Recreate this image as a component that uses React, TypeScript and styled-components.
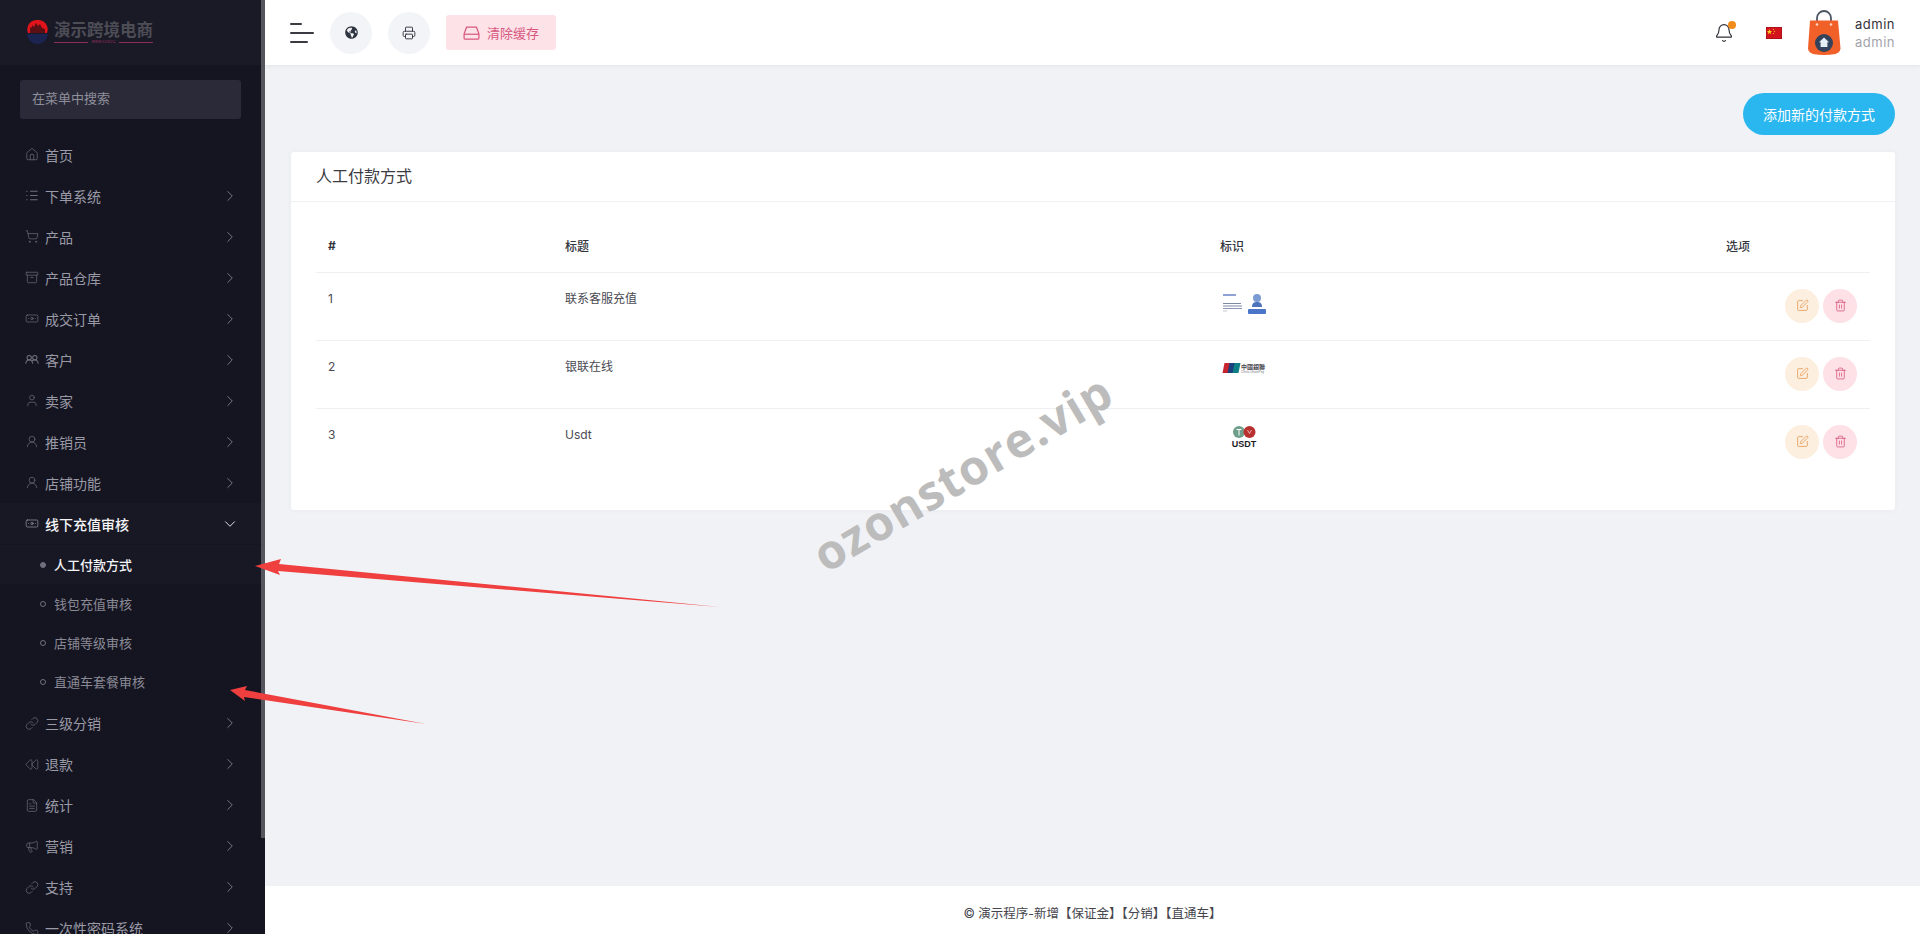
import React from "react";
import styled, { createGlobalStyle } from "styled-components";
import {
  Home, ShoppingCart, Archive, Banknote, User, UserRound, Link, Rewind, FileText,
  Megaphone, Phone, ChevronRight, ChevronDown, Printer, Bell, SquarePen, Trash2,
} from "lucide-react";
import { FaGlobeAmericas } from "react-icons/fa";

const FONT = `Inter, "Noto Sans CJK SC", "Noto Sans", sans-serif`;

const Global = createGlobalStyle`
  html, body { margin: 0; padding: 0; height: 100%; overflow: hidden; background: #f1f2f6; }
  #root { height: 100%; }
  * { box-sizing: border-box; }
  body { font-family: ${FONT}; color: #3b3b45; }
`;

const Page = styled.div`
  position: relative;
  display: flex;
  height: 934px;
  width: 1920px;
  overflow: hidden;
`;

/* ---------- sidebar ---------- */
const Sidebar = styled.aside`
  position: relative;
  flex: 0 0 265px;
  height: 100%;
  background: #151521;
  overflow: hidden;
  padding-right: 4px;
`;
const Thumb = styled.div`
  position: absolute;
  right: 0;
  top: 0;
  width: 4px;
  height: 838px;
  background: #56565f;
`;
const Brand = styled.div`
  height: 65px;
  background: #1a1a27;
  display: flex;
  align-items: flex-start;
  padding: 19px 0 0 27px;
  gap: 6px;
`;
const BrandText = styled.div`
  display: flex;
  flex-direction: column;
`;
const BrandName = styled.div`
  font-size: 16.5px;
  line-height: 22px;
  font-weight: 700;
  color: #4d4d56;
  white-space: nowrap;
`;
const BrandRule = styled.div`
  display: flex;
  align-items: center;
  gap: 3px;
  height: 4px;
  margin-top: -1px;
  color: #8a2f55;
  font-size: 4px;
  line-height: 4px;
  white-space: nowrap;
  &::before, &::after { content: ""; flex: 1; height: 1px; background: #8a2f55; }
`;
const SearchBox = styled.div`
  margin: 15px 20px 0;
  height: 39px;
  border-radius: 3px;
  background: #2a2a38;
  color: #8f8f9b;
  font-size: 13px;
  line-height: 37px;
  padding-left: 12px;
  width: 221px;
`;
const Menu = styled.nav`
  margin-top: 15px;
  display: flex;
  flex-direction: column;
`;
const Row = styled.div<{ $open?: boolean }>`
  height: 41px;
  flex: 0 0 41px;
  display: flex;
  align-items: center;
  padding: 0 22px 0 25px;
  font-size: 14px;
  color: ${(p) => (p.$open ? "#f4f4f6" : "#9a9aa6")};
  font-weight: ${(p) => (p.$open ? 500 : 400)};
  background: ${(p) => (p.$open ? "#181825" : "transparent")};
  svg.lead { color: ${(p) => (p.$open ? "#9a9aa6" : "#6f6f7d")}; }
  svg.arrow { color: ${(p) => (p.$open ? "#e4e4ea" : "#8b8b96")}; }
`;
const RowIcon = styled.span`
  display: inline-flex;
  width: 14px;
  justify-content: center;
  margin-right: 6px;
`;
const RowLabel = styled.span`
  flex: 1;
  white-space: nowrap;
`;
const SubList = styled.div`
  display: flex;
  flex-direction: column;
  padding: 1px 0 1.5px;
`;
const SubRow = styled.div<{ $active?: boolean }>`
  height: 39px;
  flex: 0 0 39px;
  display: flex;
  align-items: center;
  padding-left: 40px;
  font-size: 13px;
  color: ${(p) => (p.$active ? "#f4f4f6" : "#8a8a96")};
  font-weight: ${(p) => (p.$active ? 500 : 400)};
  background: ${(p) => (p.$active ? "#181825" : "transparent")};
`;
const Dot = styled.span<{ $active?: boolean }>`
  width: 6px;
  height: 6px;
  border-radius: 50%;
  margin-right: 8px;
  border: 1px solid #6f6f7d;
  background: ${(p) => (p.$active ? "#6f6f7d" : "transparent")};
`;

/* ---------- main ---------- */
const Main = styled.main`
  flex: 1;
  display: flex;
  flex-direction: column;
  min-width: 0;
  height: 100%;
`;
const Topbar = styled.header`
  height: 65px;
  flex: 0 0 65px;
  background: #fff;
  display: flex;
  align-items: center;
  padding: 0 25px 0 25px;
  box-shadow: 0 1px 4px rgba(60, 60, 90, 0.08);
  position: relative;
`;
const Burger = styled.div`
  display: flex;
  flex-direction: column;
  gap: 7px;
  width: 24px;
  margin-right: 16px;
`;
const BurgerLine = styled.span<{ $w: number }>`
  display: block;
  height: 2px;
  width: ${(p) => p.$w}px;
  background: #3a3a42;
  border-radius: 1px;
`;
const RoundBtn = styled.div`
  width: 42px;
  height: 42px;
  border-radius: 50%;
  background: #f3f4f8;
  color: #2f3540;
  display: flex;
  align-items: center;
  justify-content: center;
  margin-right: 16px;
`;
const ClearBtn = styled.div`
  width: 110px;
  height: 35px;
  border-radius: 3px;
  background: #fde2e8;
  color: #d8587f;
  font-size: 13px;
  display: flex;
  align-items: center;
  justify-content: center;
  gap: 7px;
`;
const TopRight = styled.div`
  margin-left: auto;
  display: flex;
  align-items: center;
`;
const BellWrap = styled.div`
  position: relative;
  width: 20px;
  height: 24px;
  color: #2f3036;
  margin-right: 32px;
  display: flex;
  align-items: center;
  justify-content: center;
`;
const BellDot = styled.span`
  position: absolute;
  top: 0;
  right: -2px;
  width: 8px;
  height: 8px;
  border-radius: 50%;
  background: #f18b1c;
`;
const FlagWrap = styled.span`
  display: inline-flex;
  margin-right: 25px;
`;
const UserBlock = styled.div`
  display: flex;
  flex-direction: column;
  margin-left: 14px;
  font-size: 13px;
  line-height: 18px;
  letter-spacing: 0.5px;
`;
const UserName = styled.span`
  color: #33333b;
`;
const UserRole = styled.span`
  color: #a3a3ab;
`;
const Content = styled.div`
  flex: 1;
  padding: 28px 25px 0 26px;
  display: flex;
  flex-direction: column;
`;
const Actions = styled.div`
  display: flex;
  justify-content: flex-end;
  margin-bottom: 17px;
`;
const AddBtn = styled.div`
  width: 152px;
  height: 42px;
  border-radius: 21px;
  background: #2ab7ef;
  color: #fff;
  font-size: 14px;
  display: flex;
  align-items: center;
  justify-content: center;
`;
const Card = styled.section`
  background: #fff;
  border-radius: 3px;
  height: 358px;
  box-shadow: 0 0 6px rgba(80, 80, 110, 0.04);
`;
const CardHead = styled.div`
  height: 50px;
  border-bottom: 1px solid #eef0f3;
  padding-left: 25px;
  font-size: 16px;
  line-height: 49px;
  color: #3b3b42;
`;
const CardBody = styled.div`
  padding: 20px 25px 0;
`;
const Table = styled.table`
  width: 100%;
  table-layout: fixed;
  border-collapse: collapse;
  font-size: 12px;
`;
const Th = styled.th<{ $w?: number }>`
  ${(p) => (p.$w ? `width: ${p.$w}px;` : "")}
  height: 50px;
  text-align: left;
  padding: 0 12px 2px;
  font-weight: 500;
  color: #33333b;
  border-bottom: 1px solid #eef0f3;
`;
const HashTh = styled(Th)`
  font-weight: 700;
`;
const Tr = styled.tr`
  & + & td { border-top: 1px solid #eef0f3; }
`;
const Td = styled.td`
  height: 68px;
  vertical-align: top;
  padding: 17px 12px 0;
  line-height: 18px;
  color: #4a4a52;
`;
const LogoCell = styled(Td)`
  padding: 15px 0 0 12px;
`;
const OptCell = styled(Td)`
  padding: 16px 13px 0 0;
`;
const OptRow = styled.div`
  display: flex;
  justify-content: flex-end;
  gap: 4px;
`;
const CircleBtn = styled.div<{ $kind: "edit" | "del" }>`
  width: 34px;
  height: 34px;
  border-radius: 50%;
  display: flex;
  align-items: center;
  justify-content: center;
  background: ${(p) => (p.$kind === "edit" ? "#fcefdf" : "#fde1e7")};
  color: ${(p) => (p.$kind === "edit" ? "#e5934a" : "#d64b76")};
`;
const Footer = styled.footer`
  height: 48px;
  flex: 0 0 48px;
  background: #fff;
  display: flex;
  align-items: center;
  justify-content: center;
  padding-top: 4px;
  font-size: 12.5px;
  color: #45454d;
`;

/* ---------- overlays ---------- */
const Watermark = styled.div`
  position: absolute;
  left: 962px;
  top: 472px;
  transform: translate(-50%, -50%) rotate(-30.5deg);
  font-family: "Open Sans", sans-serif;
  font-weight: 700;
  font-size: 48px;
  letter-spacing: 1px;
  color: #bcbcbc;
  white-space: nowrap;
  pointer-events: none;
`;
const ArrowLayer = styled.svg`
  position: absolute;
  left: 0;
  top: 0;
  pointer-events: none;
`;

const ic = { size: 15, strokeWidth: 1.2, className: "lead" };

const OrderListIcon = () => (
  <svg className="lead" width="15" height="15" viewBox="0 0 15 15" fill="none" stroke="currentColor" strokeWidth="1.1">
    <path d="M5.500 3h8M5.500 7.500h8M5.500 12h8" />
    <path d="M1.500 2.500l1 .8M1.500 7.500h1M1.500 12.500l1-.8" />
  </svg>
);
const PeopleIcon = () => (
  <svg className="lead" width="15" height="15" viewBox="0 0 15 15" fill="none" stroke="currentColor" strokeWidth="1.1">
    <circle cx="4.500" cy="5.500" r="2.300" />
    <circle cx="10.500" cy="5.500" r="2.300" />
    <path d="M.8 12c.3-2.500 1.700-4 3.700-4s3.400 1.500 3.700 4M7.500 9c.7-.7 1.800-1 3-1 2 0 3.400 1.500 3.700 4" />
  </svg>
);

const before = [
  { t: "首页", i: <Home {...ic} />, noArrow: true },
  { t: "下单系统", i: <OrderListIcon /> },
  { t: "产品", i: <ShoppingCart {...ic} /> },
  { t: "产品仓库", i: <Archive {...ic} /> },
  { t: "成交订单", i: <Banknote {...ic} /> },
  { t: "客户", i: <PeopleIcon /> },
  { t: "卖家", i: <User {...ic} /> },
  { t: "推销员", i: <UserRound {...ic} /> },
  { t: "店铺功能", i: <UserRound {...ic} /> },
];
const after = [
  { t: "三级分销", i: <Link {...ic} /> },
  { t: "退款", i: <Rewind {...ic} /> },
  { t: "统计", i: <FileText {...ic} /> },
  { t: "营销", i: <Megaphone {...ic} /> },
  { t: "支持", i: <Link {...ic} /> },
  { t: "一次性密码系统", i: <Phone {...ic} /> },
];
const subs = ["人工付款方式", "钱包充值审核", "店铺等级审核", "直通车套餐审核"];

const MenuRow = ({ t, i, noArrow }: { t: string; i: React.ReactNode; noArrow?: boolean }) => (
  <Row>
    <RowIcon>{i}</RowIcon>
    <RowLabel>{t}</RowLabel>
    {!noArrow && <ChevronRight className="arrow" size={18} strokeWidth={1.1} />}
  </Row>
);

const LogoMark = () => (
  <svg width="21" height="27" viewBox="0 0 21 27">
    <path d="M10.500 1a9.500 9.500 0 0 1 9.500 13H1A9.500 9.500 0 0 1 10.500 1z" fill="#e0141a" />
    <path d="M0 15h21c-1 6-5 10-10.500 10S1 21 0 15z" fill="#1b2350" />
    <path d="M3 14V9l2-1V6l2 2 2-4 2 3 2-2 2 4 3 1v4z" fill="#5c1016" />
  </svg>
);

const HddIcon = () => (
  <svg width="17" height="14" viewBox="0 0 20 17" fill="none" stroke="currentColor" strokeWidth="1.5">
    <path d="M4 1.500h12l3 8v5a1.500 1.500 0 0 1-1.500 1.500h-15A1.500 1.500 0 0 1 1 14.500v-5z" />
    <path d="M1 10h18" />
  </svg>
);

const Flag = () => (
  <svg width="16" height="12" viewBox="0 0 16 12">
    <rect width="16" height="12" fill="#d3141c" />
    <rect x="0.250" y="0.250" width="15.500" height="11.500" fill="none" stroke="#8e1016" strokeWidth="0.500" />
    <path d="M3.500 2l.7 2h2l-1.600 1.200.6 2-1.700-1.200-1.700 1.200.6-2L.8 4h2z" fill="#f7d21e" />
    <circle cx="7.500" cy="2.500" r=".6" fill="#f7d21e" />
    <circle cx="8.500" cy="4.500" r=".6" fill="#f7d21e" />
    <circle cx="7.500" cy="6.500" r=".6" fill="#f7d21e" />
  </svg>
);

const Bag = () => (
  <svg width="34" height="46" viewBox="0 0 34 46">
    <path d="M10 15V8a7 7 0 0 1 14 0v7" fill="none" stroke="#4d5566" strokeWidth="1.800" />
    <path d="M3 10.500h28l2.500 28q-.5 4-5 5.500Q17 46 6 44q-4.500-1.500-5-5.500z" fill="#f2602a" />
    <circle cx="10" cy="14.500" r="1.300" fill="#fbd6c6" />
    <circle cx="24" cy="14.500" r="1.300" fill="#fbd6c6" />
    <circle cx="17" cy="33" r="9" fill="#33425a" />
    <path d="M17 27.500l5 4.800h-1.600V37h-6.800v-4.700H12z" fill="#e6edf5" />
  </svg>
);

const ServiceLogo = () => (
  <svg width="50" height="32" viewBox="0 0 50 32">
    <rect x="3" y="6" width="13" height="2" fill="#8ea2d6" />
    <rect x="3" y="15" width="18" height="1" fill="#7f8aa8" />
    <rect x="3" y="17.500" width="19" height="1" fill="#7f8aa8" />
    <rect x="3" y="20" width="19" height="1" fill="#8e98b2" />
    <rect x="3" y="22.500" width="4" height="1" fill="#c3c8d4" />
    <circle cx="37" cy="10" r="4" fill="#7c9bd3" />
    <path d="M32 19c0-4 2-5 5-5s5 1 5 5z" fill="#4e74bd" />
    <rect x="28" y="21" width="18" height="5" rx="1" fill="#4a75c9" />
  </svg>
);

const UnionLogo = () => (
  <svg width="50" height="32" viewBox="0 0 50 32">
    <path d="M4.500 7h6l-2 10h-6z" fill="#c8242e" />
    <path d="M9.500 7h6l-2 10h-6z" fill="#1c3f7d" />
    <path d="M14.500 7h6l-2 10h-6z" fill="#0f7f86" />
    <text x="21" y="12.500" fontSize="6" fontWeight="700" fill="#4a4a50" fontFamily="Noto Sans CJK TC, sans-serif">中國銀聯</text>
    <text x="21" y="16.500" fontSize="3.200" fill="#7a7a80" fontFamily="Liberation Sans, sans-serif">China UnionPay</text>
  </svg>
);

const UsdtBox = styled.div`
  width: 48px;
  display: flex;
  flex-direction: column;
  align-items: center;
  padding-top: 1px;
`;
const UsdtText = styled.span`
  font-family: "Liberation Sans", sans-serif;
  font-weight: 700;
  font-size: 9px;
  line-height: 10px;
  color: #1d1d1f;
`;
const UsdtLogo = () => (
  <UsdtBox>
    <svg width="24" height="14" viewBox="0 0 24 14">
      <circle cx="7" cy="7" r="6" fill="#6f9f8a" />
      <circle cx="17.500" cy="7" r="6" fill="#b8302f" />
      <path d="M4.500 4.500h5M7 4.500v6" stroke="#fff" strokeWidth="1" />
      <path d="M15.500 5l2 3.500 2-3.500" stroke="#f4c7c7" strokeWidth=".8" fill="none" />
    </svg>
    <UsdtText>USDT</UsdtText>
  </UsdtBox>
);

const rows = [
  { n: "1", t: "联系客服充值", logo: <ServiceLogo /> },
  { n: "2", t: "银联在线", logo: <UnionLogo /> },
  { n: "3", t: "Usdt", logo: <UsdtLogo /> },
];

export default function App() {
  return (
    <Page>
      <Global />
      <Sidebar>
        <Brand>
          <LogoMark />
          <BrandText>
            <BrandName>演示跨境电商</BrandName>
            <BrandRule>www.XXB2C</BrandRule>
          </BrandText>
        </Brand>
        <SearchBox>在菜单中搜索</SearchBox>
        <Menu>
          {before.map((m) => (
            <MenuRow key={m.t} {...m} />
          ))}
          <Row $open>
            <RowIcon>
              <Banknote {...ic} />
            </RowIcon>
            <RowLabel>线下充值审核</RowLabel>
            <ChevronDown className="arrow" size={18} strokeWidth={1.3} />
          </Row>
          <SubList>
            {subs.map((s, i) => (
              <SubRow key={s} $active={i === 0}>
                <Dot $active={i === 0} />
                {s}
              </SubRow>
            ))}
          </SubList>
          {after.map((m) => (
            <MenuRow key={m.t} {...m} />
          ))}
        </Menu>
        <Thumb />
      </Sidebar>
      <Main>
        <Topbar>
          <Burger>
            <BurgerLine $w={12} />
            <BurgerLine $w={24} />
            <BurgerLine $w={18} />
          </Burger>
          <RoundBtn>
            <FaGlobeAmericas size={13} />
          </RoundBtn>
          <RoundBtn>
            <Printer size={14} strokeWidth={1.6} />
          </RoundBtn>
          <ClearBtn>
            <HddIcon />
            清除缓存
          </ClearBtn>
          <TopRight>
            <BellWrap>
              <Bell size={20} strokeWidth={1.4} />
              <BellDot />
            </BellWrap>
            <FlagWrap>
              <Flag />
            </FlagWrap>
            <Bag />
            <UserBlock>
              <UserName>admin</UserName>
              <UserRole>admin</UserRole>
            </UserBlock>
          </TopRight>
        </Topbar>
        <Content>
          <Actions>
            <AddBtn>添加新的付款方式</AddBtn>
          </Actions>
          <Card>
            <CardHead>人工付款方式</CardHead>
            <CardBody>
              <Table>
                <thead>
                  <tr>
                    <HashTh $w={237}>#</HashTh>
                    <Th $w={655}>标题</Th>
                    <Th $w={506}>标识</Th>
                    <Th>选项</Th>
                  </tr>
                </thead>
                <tbody>
                  {rows.map((r) => (
                    <Tr key={r.n}>
                      <Td>{r.n}</Td>
                      <Td>{r.t}</Td>
                      <LogoCell>{r.logo}</LogoCell>
                      <OptCell>
                        <OptRow>
                          <CircleBtn $kind="edit">
                            <SquarePen size={13} strokeWidth={1.4} />
                          </CircleBtn>
                          <CircleBtn $kind="del">
                            <Trash2 size={13} strokeWidth={1.4} />
                          </CircleBtn>
                        </OptRow>
                      </OptCell>
                    </Tr>
                  ))}
                </tbody>
              </Table>
            </CardBody>
          </Card>
        </Content>
        <Footer>© 演示程序-新增【保证金】【分销】【直通车】</Footer>
      </Main>
      <Watermark>ozonstore.vip</Watermark>
      <ArrowLayer width="1920" height="934" viewBox="0 0 1920 934">
        <polygon points="255,566 281,559 279,564 720,607 278,571 280,575" fill="#ef3f3f" />
        <polygon points="230,690 247,686 245,690 426,724 244,697 245,701" fill="#ef3f3f" />
      </ArrowLayer>
    </Page>
  );
}
